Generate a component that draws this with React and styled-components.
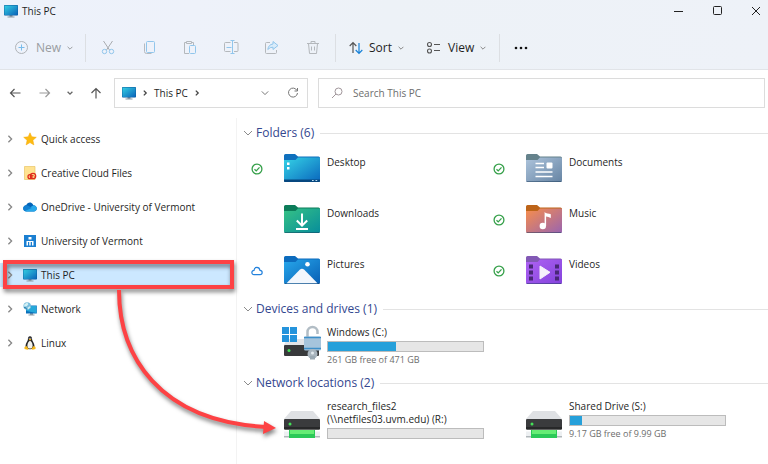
import React, { useState } from 'react'
import styled, { createGlobalStyle } from 'styled-components'

const GlobalStyle = createGlobalStyle`
    * {
        box-sizing: border-box;
    }
    body {
        margin: 0;
        background: #fff;
        color: #1f1f1f;
        font-family: 'Open Sans', 'Noto Sans', sans-serif;
        font-size: 10px;
        line-height: 14px;
    }
    button, input {
        font: inherit;
        color: inherit;
    }
    svg {
        display: block;
        flex: none;
    }
`

const Window = styled.div`
    display: flex;
    flex-direction: column;
    min-height: 100vh;
`

const Chrome = styled.header`
    background: linear-gradient(100deg, #edf2fb 0%, #eef2fa 25%, #edf2f7 50%, #eef2f8 100%);
    border-bottom: 1px solid #e1e4e8;
`

const TitleBar = styled.div`
    display: flex;
    align-items: center;
    height: 22px;
    padding-left: 4px;
`

const Title = styled.h1`
    flex: 1;
    margin: 0 0 0 4px;
    font-size: 10px;
    font-weight: 400;
`

const PlainButton = styled.button`
    display: flex;
    align-items: center;
    justify-content: center;
    padding: 0;
    border: 0;
    background: none;
`

const WindowButton = styled(PlainButton)`
    width: 38px;
    height: 20px;

    &:last-child {
        width: 24px;
        margin-left: 8px;
    }
`

const Toolbar = styled.div`
    display: flex;
    align-items: center;
    height: 47px;
    padding: 4px 0 0 14px;
`

const LabelButton = styled(PlainButton)`
    gap: 6px;
    width: ${props => props.$width}px;
    justify-content: flex-start;
    font-size: 12px;
    line-height: 18px;
    color: ${props => props.disabled ? '#9a9da1' : '#1f1f1f'};
`

const IconButton = styled(PlainButton)`
    width: 41px;
    height: 28px;
`

const Divider = styled.span`
    width: 1px;
    height: 28px;
    margin-left: ${props => props.$before}px;
    margin-right: ${props => props.$after}px;
    background: #dcdfe3;
`

const AddressRow = styled.div`
    display: flex;
    align-items: center;
    padding: 8px 3px 10px 9px;
`

const NavButton = styled(PlainButton)`
    width: ${props => props.$width}px;
    height: 20px;
    justify-content: flex-start;
`

const AddressBar = styled.div`
    display: flex;
    align-items: center;
    flex: 177 1 0;
    height: 30px;
    padding: 0 8px 0 7px;
    border: 1px solid #dcdcdc;
`

const Crumb = styled.a`
    flex: 1;
    display: flex;
    align-items: center;
    gap: 6px;
    color: inherit;
    text-decoration: none;
`

const SearchBox = styled.label`
    display: flex;
    align-items: center;
    gap: 10px;
    flex: 421 1 0;
    height: 30px;
    margin-left: 10px;
    padding: 0 12px;
    border: 1px solid #dcdcdc;
`

const SearchInput = styled.input`
    flex: 1;
    min-width: 0;
    padding: 0;
    border: 0;
    outline: 0;
    background: none;

    &::placeholder {
        color: #6d6d6d;
        opacity: 1;
    }
`

const Body = styled.div`
    position: relative;
    display: flex;
    flex: 1;
`

const Sidebar = styled.nav`
    display: flex;
    flex-direction: column;
    gap: 10px;
    width: 237px;
    flex: none;
    padding: 9px 4px 9px 0;
    border-right: 1px solid #f3f3f3;
`

const SideLink = styled.a`
    position: relative;
    display: flex;
    align-items: center;
    height: 24px;
    padding-left: 6px;
    background: ${props => props.$selected ? '#cce8ff' : 'none'};
    color: inherit;
    text-decoration: none;
`

const SideIcon = styled.span`
    display: flex;
    justify-content: center;
    width: 16px;
    margin: 0 3px 0 8px;
`

const Highlight = styled.span`
    position: absolute;
    inset: -3px -2px -2px 3px;
    border: 4px solid #fd4244;
    filter: drop-shadow(1px 3px 2px rgba(0, 0, 0, 0.5));
`

const Main = styled.main`
    flex: 1;
    min-width: 0;
    padding: 6px 0 24px 6px;
`

const GroupTitle = styled.h2`
    display: flex;
    align-items: center;
    gap: 3px;
    margin: 0;
    height: 18px;
    font-size: 12px;
    line-height: 18px;
    font-weight: 400;
    color: #33478f;

    &::after {
        content: '';
        flex: 1;
        height: 1px;
        margin-left: 3px;
        background: #e3e3e3;
    }
`

const Grid = styled.div`
    display: grid;
    grid-template-columns: repeat(auto-fill, 242px);
    padding: 0 0 5px 5px;
`

const Folder = styled.div`
    display: flex;
    height: 51px;
    padding-top: 8px;
`

const Status = styled.span`
    display: flex;
    align-items: center;
    justify-content: center;
    width: 18px;
    height: 38px;
    margin-right: 18px;
`

const FolderName = styled.span`
    margin: 5px 0 0 7px;
`

const Drive = styled.div`
    display: flex;
    align-items: center;
    height: 51px;
    padding: 5px 0 0 36px;
`

const DriveIcon = styled.span`
    display: flex;
    justify-content: center;
    width: 36px;
    flex: none;
`

const DriveInfo = styled.div`
    width: 157px;
    margin-left: 7px;
    line-height: 13px;
`

const Bar = styled.div`
    height: 11px;
    margin: 2px 0 1px;
    border: 1px solid #bcbcbc;
    background: #e6e6e6;
`

const BarFill = styled.div`
    height: 100%;
    background: #26a0da;
`

const Free = styled.div`
    font-size: 9px;
    color: #6d6d6d;
`

const Arrow = styled.svg`
    position: absolute;
    left: 100px;
    top: 164px;
    pointer-events: none;
    filter: drop-shadow(1px 3px 2px rgba(0, 0, 0, 0.5));
`

function Chevron({ dir = 'right', size = 6, color = '#777', width = 1.3 }) {
    const turn = dir === 'down' ? 'M1 3l4 4 4-4' : 'M3 1l4 4-4 4'
    return (
        <svg width={size} height={size} viewBox="0 0 10 10" fill="none" stroke={color} strokeWidth={width * 10 / size}>
            <path d={turn} />
        </svg>
    )
}

function Monitor() {
    return (
        <svg width="14" height="14" viewBox="0 0 14 14">
            <defs>
                <linearGradient id="screen" x1="0" y1="0" x2="1" y2="1">
                    <stop offset="0" stopColor="#35d1e4" />
                    <stop offset="1" stopColor="#0a62b8" />
                </linearGradient>
            </defs>
            <path d="M5.5 11h3v1.5h2v.9h-7v-.9h2z" fill="#8a9aa5" />
            <rect y="1" width="14" height="10.6" rx=".8" fill="#0b5a9d" />
            <rect x=".4" y="1.4" width="13.2" height="9.6" rx=".5" fill="url(#screen)" />
        </svg>
    )
}

const sideIcons = {
    star: (
        <svg width="14" height="14" viewBox="0 0 14 14">
            <path d="M7 .8l1.8 4 4.5.5-3.4 3 1 4.6L7 10.6l-3.9 2.3 1-4.6-3.4-3 4.5-.5z" fill="#fdbb11" stroke="#f5a80b" strokeWidth=".5" />
        </svg>
    ),
    creative: (
        <svg width="14" height="14" viewBox="0 0 14 14">
            <path d="M1.500.5h10.500v13H1.500z" fill="#ffe391" stroke="#e9c465" strokeWidth=".7" />
            <g fill="none" stroke="#e02b1c" strokeWidth="1.300">
                <circle cx="7" cy="10.700" r="2" />
                <circle cx="10" cy="10" r="2.700" />
                <path d="M7.500 11.200l2.500-2 1.500 1.600" strokeWidth=".8" />
            </g>
        </svg>
    ),
    cloud: (
        <svg width="14" height="10" viewBox="0 0 14 10">
            <path d="M3.200 3.200C4.200.9 6.500 0 8.500 1c1 .5 1.600 1.400 1.900 2.300 2 .1 3.400 1.600 3.400 3.200 0 1.700-1.400 2.900-3 2.900H3C1.300 9.400.2 8 .2 6.300c0-1.700 1.200-3 3-3.100z" fill="#0364b8" />
            <path d="M1.500 8.900l7-4.300 1.900-1.300c2 .1 3.400 1.600 3.400 3.200 0 1.700-1.400 2.900-3 2.900H3c-.6 0-1.100-.2-1.500-.5z" fill="#28a8ea" />
            <path d="M.2 6.300c0-1.700 1.300-3.100 3-3.100 1 0 1.900.3 2.600.8l3 2-7 3C.8 8.600.2 7.500.2 6.300z" fill="#1180d2" />
        </svg>
    ),
    building: (
        <svg width="14" height="14" viewBox="0 0 14 14">
            <path d="M1 1h12v12H1z" fill="#1b7fd1" />
            <path d="M5.500 3h3v2.500h-3zM3.500 7h7v1h-7zM3.500 8H5v3.500H3.500zM6.200 8h1.500v3.500H6.200zM9 8h1.500v3.500H9z" fill="#fff" />
        </svg>
    ),
    monitor: <Monitor />,
    network: (
        <svg width="14" height="14" viewBox="0 0 14 14">
            <path d="M7 11h3v1.500h1.500v.9H5.500v-.9H7z" fill="#8a9aa5" />
            <path d="M3 3.500h10.800v8H3z" fill="#0b6fba" />
            <path d="M3.400 3.900h10v7.200l-10-2z" fill="#26a8da" />
            <circle cx="4.200" cy="4" r="3.800" fill="#79bddd" />
            <path d="M1.200 2.500l3-1.900 1.200 1.700-1.600 1.900-2.600.2zM4.500 5.800l2.200-1.600.8 1-2.300 2.200z" fill="#d2f0f4" />
            <path d="M1 5.500l2 .4.500 1.500" stroke="#297eaa" fill="none" />
        </svg>
    ),
    linux: (
        <svg width="12" height="14" viewBox="0 0 12 14">
            <path d="M6 .3c1.700 0 2.200 1.400 2.100 3.100 0 1.600 2.400 3.600 2.400 6.600 0 2-1.500 3.200-4.500 3.200S1.500 12 1.500 10c0-3 2.400-5 2.400-6.600C3.800 1.700 4.300.3 6 .3z" fill="#25262a" />
            <path d="M6 5c1.400 0 2.600 2.700 2.600 4.700S7.500 12.500 6 12.500s-2.600-.8-2.600-2.800S4.600 5 6 5z" fill="#f1f1ec" />
            <path d="M4.800 3.300L6 2.700l1.400.6L6 4.700zM.5 11l2-1 2.300 2.900-1.200.9L.5 13zM11.500 11l-2-1-2 2.800 1 1 3-.8z" fill="#f6b719" />
            <circle cx="5.200" cy="2.300" r=".5" fill="#fff" />
            <circle cx="6.900" cy="2.300" r=".5" fill="#fff" />
        </svg>
    )
}

const folderColors = {
    desktop: ['#0f70bd', '#35d3e6', '#0a66bd'],
    documents: ['#65828c', '#adc4dc', '#6684a3'],
    downloads: ['#0c7c59', '#36c285', '#078d9b'],
    music: ['#bd6419', '#f88e4b', '#9964b0'],
    pictures: ['#0c6bbd', '#27a7eb', '#085fb5'],
    videos: ['#8259b5', '#ae62f3', '#8443dc']
}

const folderMarks = {
    desktop: (
        <>
            <path d="M0 25.500h36V27a1 1 0 01-1 1H1a1 1 0 01-1-1z" fill="#06477f" />
            <path d="M3 8.500h2.500V11H3zM3 13h2.500v2.500H3z" fill="#fff" />
            <path d="M28 26h1.700v1H28zM31.500 26h1.700v1h-1.700z" fill="#b9dcf1" />
        </>
    ),
    documents: (
        <>
            <path d="M9.500 9.500H18M9.500 13.500H18M9.500 18h17M9.500 22.500h17" stroke="#fff" strokeWidth="1.700" />
            <rect x="20.500" y="8.500" width="6" height="6" rx="1" fill="#fff" />
        </>
    ),
    downloads: <path d="M18 8.500v12M12.800 15.500l5.200 5.200 5.200-5.200M12 24h12" fill="none" stroke="#fff" strokeWidth="2" />,
    music: (
        <>
            <circle cx="16.800" cy="21" r="3.200" fill="#fff" />
            <path d="M18.600 7c1 1.600 4.500 1.600 6.200 2.300V13c-1.600-.9-3.400-1.100-4.700-1.500V21h-1.500z" fill="#fff" />
        </>
    ),
    pictures: (
        <>
            <path d="M2.500 27.300L15.700 13.700q2.300-2 4.600 0l13.200 13.600z" fill="#f2f7fd" />
            <circle cx="23.500" cy="8.300" r="2.300" fill="#fff" />
        </>
    ),
    videos: (
        <>
            <path d="M3 8.500h4v4H3zM3 14.500h4v4H3zM3 20.500h4v4H3zM29 8.500h4v4h-4zM29 14.500h4v4h-4zM29 20.500h4v4h-4z" fill="#492777" />
            <path d="M14 10l10 6.300L14 23z" fill="#f6f2fb" stroke="#f6f2fb" strokeLinejoin="round" />
        </>
    )
}

function FolderIcon({ kind }) {
    const [tab, from, to] = folderColors[kind]
    return (
        <svg width="36" height="36" viewBox="0 -4 36 36">
            <defs>
                <linearGradient id={kind} x1="0" y1="0" x2="1" y2="1">
                    <stop offset="0" stopColor={from} />
                    <stop offset="1" stopColor={to} />
                </linearGradient>
            </defs>
            <path d="M0 1.500A1.500 1.500 0 011.500 0H11l3 2.500h20.500A1.500 1.500 0 0136 4v8H0z" fill={tab} />
            <path d="M0 6h11.500L14 3.500h21a1 1 0 011 1v22a1.500 1.500 0 01-1.500 1.500h-33A1.500 1.500 0 010 26.500z" fill={`url(#${kind})`} />
            <path d="M.5 27.500h35" stroke="#163757" strokeOpacity=".45" />
            {folderMarks[kind]}
        </svg>
    )
}

function SyncIcon({ status }) {
    if (status === 'cloud') {
        return (
            <svg width="12" height="12" viewBox="0 0 12 12" fill="none" stroke="#2482dc" strokeWidth="1.200">
                <path d="M3 9.700a2.100 2.100 0 010-4.300c.4-4 5.300-4 6 0a2.100 2.100 0 010 4.300z" />
            </svg>
        )
    }
    return (
        <svg width="12" height="12" viewBox="0 0 11 11" fill="none" stroke="#36a04a" strokeWidth="1.200">
            <circle cx="5.500" cy="5.500" r="4.500" />
            <path d="M3.200 5.700l1.600 1.500 3-3.200" />
        </svg>
    )
}

function NetworkDriveIcon() {
    return (
        <svg width="36" height="38" viewBox="0 -10 36 38">
            <path d="M7 0h22l7 8H0z" fill="#dfe1e4" />
            <rect y="8" width="36" height="10.500" rx="1" fill="#3a3b3d" />
            <path d="M0 16h36v1.500a1 1 0 01-1 1H1a1 1 0 01-1-1z" fill="#272829" />
            <circle cx="6" cy="13" r="1.500" fill="#43e257" />
            <path d="M0 20.500h36V26H0z" fill="#edf0f2" />
            <path d="M0 25h36v1.500H0z" fill="#b1b7bb" />
            <path d="M5 19h26v8H5z" fill="#2bc958" />
            <path d="M6 19h24v4H6z" fill="#66ed75" />
        </svg>
    )
}

function SystemDriveIcon() {
    return (
        <svg width="40" height="42" viewBox="0 0 40 42">
            <path d="M5 14h28l3 6H2z" fill="#e2e4e8" />
            <rect x="2" y="20" width="35" height="11" rx="1" fill="#38393b" />
            <circle cx="7" cy="25.500" r="1.500" fill="#43e257" />
            <path d="M0 2h7v7H0zM8 2h7v7H8zM0 10h7v7H0zM8 10h7v7H8z" fill="#2594dc" />
            <path d="M25.500 12V7a5 5 0 0110 0v2" fill="none" stroke="#b2bdc5" strokeWidth="2.500" />
            <rect x="22" y="11.500" width="17" height="14" rx="1.500" fill="#a6c4dc" />
            <path d="M22 12.500h17M22 23.500h17" stroke="#3f8fc8" strokeWidth="1.500" />
            <circle cx="30.500" cy="29" r="5" fill="#a9b5be" />
            <path d="M28 31h5v3.500h-5z" fill="#9ba9b3" />
            <circle cx="30.500" cy="28" r="1.500" fill="#e3eaef" />
        </svg>
    )
}

const toolIcons = [
    ['Cut', (
        <svg key="cut" width="14" height="15" viewBox="0 0 14 15" fill="none" stroke="#a9acb0">
            <path d="M2.500 1l6 9M11.500 1l-6 9" />
            <g stroke="#91c6ec"><circle cx="3.500" cy="11.500" r="2.200" /><circle cx="10.500" cy="11.500" r="2.200" /></g>
        </svg>
    )],
    ['Copy', (
        <svg key="copy" width="14" height="15" viewBox="0 0 14 15" fill="none" stroke="#91c6ec">
            <rect x="4.500" y="1.500" width="8" height="11" rx="1" />
            <path d="M2.500 3.500v8q0 2 2 2h5" stroke="#b6babf" />
        </svg>
    )],
    ['Paste', (
        <svg key="paste" width="14" height="15" viewBox="0 0 14 15" fill="none" stroke="#b4b8bc">
            <path d="M6 13.500H1.500v-11h2M8.500 2.500h2V5M3.500 1.500h5v2h-5z" />
            <rect x="6.500" y="5.500" width="6" height="8" rx="1" stroke="#91c6ec" />
        </svg>
    )],
    ['Rename', (
        <svg key="rename" width="16" height="15" viewBox="0 0 16 15" fill="none" stroke="#b4b8bc">
            <path d="M7.500 2.500h-5a1 1 0 00-1 1v7a1 1 0 001 1h5M11 2.500h3a1 1 0 011 1v7a1 1 0 01-1 1h-3" />
            <path d="M9.500 1v12M7.500.5h4M7.500 13.500h4M3.500 7.500h5" stroke="#91c6ec" />
        </svg>
    )],
    ['Share', (
        <svg key="share" width="15" height="15" viewBox="0 0 15 15" fill="none" stroke="#b4b8bc">
            <path d="M6 2.500H2.500a1 1 0 00-1 1v9a1 1 0 001 1h9a1 1 0 001-1V10" />
            <path d="M9 1.500l5 4-5 4v-2.300Q6 7 3.800 9.500 4.500 4.500 9 4z" stroke="#91c6ec" fill="#d9ecfa" />
        </svg>
    )],
    ['Delete', (
        <svg key="delete" width="14" height="15" viewBox="0 0 14 15" fill="none" stroke="#b4b8bc">
            <path d="M1 3.500h12M5 3V1.500h4V3M2.500 3.500l1 10h7l1-10M5.500 6.500v4M8.500 6.500v4" />
        </svg>
    )]
]

const places = [
    { name: 'Quick access', icon: 'star' },
    { name: 'Creative Cloud Files', icon: 'creative' },
    { name: 'OneDrive - University of Vermont', icon: 'cloud' },
    { name: 'University of Vermont', icon: 'building' },
    { name: 'This PC', icon: 'monitor' },
    { name: 'Network', icon: 'network' },
    { name: 'Linux', icon: 'linux' }
]

const folders = [
    { name: 'Desktop', kind: 'desktop', status: 'synced' },
    { name: 'Documents', kind: 'documents', status: 'synced' },
    { name: 'Downloads', kind: 'downloads' },
    { name: 'Music', kind: 'music', status: 'synced' },
    { name: 'Pictures', kind: 'pictures', status: 'cloud' },
    { name: 'Videos', kind: 'videos', status: 'synced' }
]

function DriveItem({ name, path, used, free, children }) {
    return (
        <Drive>
            <DriveIcon>{children}</DriveIcon>
            <DriveInfo>
                <div>{name}</div>
                {path && <div>{path}</div>}
                <Bar>
                    <BarFill style={{ width: `${used}%` }} />
                </Bar>
                {free && <Free>{free}</Free>}
            </DriveInfo>
        </Drive>
    )
}

function Group({ title, children }) {
    return (
        <section>
            <GroupTitle>
                <Chevron dir="down" size={10} color="#8b8b8b" width={1} />
                {title}
            </GroupTitle>
            <Grid>{children}</Grid>
        </section>
    )
}

function App() {
    const [search, setSearch] = useState('')
    const [selected, setSelected] = useState('This PC')

    const handleSearch = (event) => {
        setSearch(event.target.value)
    }

    return (
        <Window>
            <GlobalStyle />
            <Chrome>
                <TitleBar>
                    <Monitor />
                    <Title>This PC</Title>
                    <WindowButton aria-label="Minimize">
                        <svg width="10" height="10" stroke="#222"><path d="M0 5.500h9" /></svg>
                    </WindowButton>
                    <WindowButton aria-label="Maximize">
                        <svg width="10" height="10" fill="none" stroke="#222"><rect x="1.500" y=".5" width="8" height="8" rx="1" /></svg>
                    </WindowButton>
                    <WindowButton aria-label="Close">
                        <svg width="10" height="10" stroke="#222"><path d="M1 1l8 8M9 1L1 9" /></svg>
                    </WindowButton>
                </TitleBar>
                <Toolbar>
                    <LabelButton $width={71} disabled>
                        <svg width="16" height="15" fill="none" stroke="#b0b4b8">
                            <circle cx="7.500" cy="7.500" r="6" />
                            <path d="M7.500 4.500v6M4.500 7.500h6" stroke="#79bceb" />
                        </svg>
                        New
                        <Chevron dir="down" color="#9a9da1" width={1} />
                    </LabelButton>
                    <Divider $before={0} $after={1} />
                    {toolIcons.map(([name, icon]) => (
                        <IconButton key={name} aria-label={name} disabled>{icon}</IconButton>
                    ))}
                    <Divider $before={2} $after={13} />
                    <LabelButton $width={77}>
                        <svg width="14" height="14" fill="none" stroke="#555" strokeWidth="1.200">
                            <path d="M4 12V2M.7 5L4 1.700 7.300 5" />
                            <path d="M10 2v10M6.700 9l3.300 3.300L13.300 9" stroke="#1681d8" />
                        </svg>
                        Sort
                        <Chevron dir="down" color="#888" width={1} />
                    </LabelButton>
                    <LabelButton $width={73}>
                        <svg width="16" height="14" fill="none" stroke="#555" strokeWidth="1.100">
                            <circle cx="3.500" cy="3.500" r="2" />
                            <circle cx="3.500" cy="10" r="2" />
                            <path d="M8 3.500h6M8 9.500h6" />
                        </svg>
                        View
                        <Chevron dir="down" color="#888" width={1} />
                    </LabelButton>
                    <Divider $before={0} $after={0} />
                    <IconButton aria-label="See more">
                        <svg width="14" height="4" fill="#111">
                            <circle cx="2" cy="2" r="1.300" /><circle cx="7" cy="2" r="1.300" /><circle cx="12" cy="2" r="1.300" />
                        </svg>
                    </IconButton>
                </Toolbar>
            </Chrome>

            <AddressRow>
                <NavButton $width={30} aria-label="Back">
                    <svg width="12" height="12" fill="none" stroke="#555" strokeWidth="1.200"><path d="M11.500 6H1.500M5.500 2l-4 4 4 4" /></svg>
                </NavButton>
                <NavButton $width={28} aria-label="Forward">
                    <svg width="12" height="12" fill="none" stroke="#999" strokeWidth="1.200"><path d="M.5 6h10M6.500 2l4 4-4 4" /></svg>
                </NavButton>
                <NavButton $width={23} aria-label="Recent locations">
                    <Chevron dir="down" color="#666" />
                </NavButton>
                <NavButton $width={24} aria-label="Up">
                    <svg width="12" height="12" fill="none" stroke="#555" strokeWidth="1.200"><path d="M6 11.500v-10M1.500 6L6 1.500 10.500 6" /></svg>
                </NavButton>
                <AddressBar>
                    <Crumb href="#this-pc">
                        <Monitor />
                        <Chevron color="#444" />
                        <span>This PC</span>
                        <Chevron color="#444" />
                    </Crumb>
                    <NavButton $width={26} aria-label="Previous locations">
                        <Chevron dir="down" size={8} color="#777" width={1} />
                    </NavButton>
                    <NavButton $width={12} aria-label="Refresh">
                        <svg width="12" height="12" fill="none" stroke="#777"><path d="M10 3.500A4.500 4.500 0 1 0 10.500 6M10.500 1v3H7.500" /></svg>
                    </NavButton>
                </AddressBar>
                <SearchBox>
                    <svg width="12" height="12" fill="none" stroke="#a1979b"><circle cx="7.500" cy="4.500" r="3.500" /><path d="M5 7L1 11" /></svg>
                    <SearchInput
                        type="text"
                        aria-label="Search This PC"
                        placeholder="Search This PC"
                        value={search}
                        onChange={handleSearch}
                    />
                </SearchBox>
            </AddressRow>

            <Body>
                <Sidebar>
                    {places.map(place => (
                        <SideLink
                            key={place.name}
                            href="#place"
                            $selected={selected === place.name}
                            onClick={() => setSelected(place.name)}
                        >
                            <Chevron size={8} color="#888" />
                            <SideIcon>{sideIcons[place.icon]}</SideIcon>
                            {place.name}
                            {place.name === 'This PC' && <Highlight />}
                        </SideLink>
                    ))}
                </Sidebar>
                <Main>
                    <Group title="Folders (6)">
                        {folders.map(folder => (
                            <Folder key={folder.kind}>
                                <Status>{folder.status && <SyncIcon status={folder.status} />}</Status>
                                <FolderIcon kind={folder.kind} />
                                <FolderName>{folder.name}</FolderName>
                            </Folder>
                        ))}
                    </Group>
                    <Group title="Devices and drives (1)">
                        <DriveItem name="Windows (C:)" used={44} free="261 GB free of 471 GB">
                            <SystemDriveIcon />
                        </DriveItem>
                    </Group>
                    <Group title="Network locations (2)">
                        <DriveItem name="research_files2" path="(\\netfiles03.uvm.edu) (R:)" used={0}>
                            <NetworkDriveIcon />
                        </DriveItem>
                        <DriveItem name="Shared Drive (S:)" used={8} free="9.17 GB free of 9.99 GB">
                            <NetworkDriveIcon />
                        </DriveItem>
                    </Group>
                </Main>
                <Arrow width="185" height="160">
                    <path d="M19 8C19 73 58 139 166 145" fill="none" stroke="#fd4244" strokeWidth="4" />
                    <path d="M164 139l12 7-13 6z" fill="#fd4244" />
                </Arrow>
            </Body>
        </Window>
    )
}

export default App
